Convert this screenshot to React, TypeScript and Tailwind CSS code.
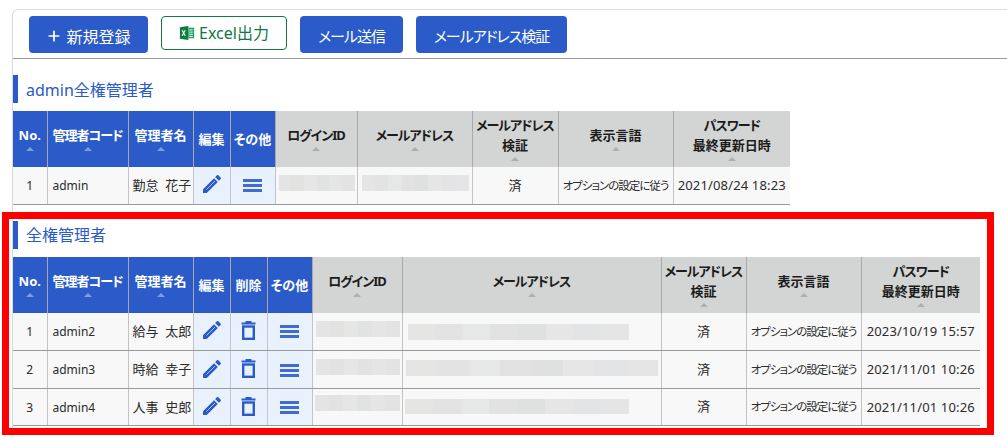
import { Plus } from 'lucide-react';

const blue = 'text-[#2a5bc8]';

type Blur = { box: string; colors: string[] };
type Row = { no: string; code: string; name: string; login: Blur; mail: Blur; lang: string; date: string };

function Arrow({ dark }: { dark?: boolean }) {
  return (
    <div className="flex h-2 items-center justify-center">
      <div className={`h-0 w-0 border-x-4 border-b-4 border-x-transparent ${dark ? 'border-b-[#adafae]' : 'border-b-[#7f9cdf]'}`} />
    </div>
  );
}

function PencilIcon() {
  return (
    <svg viewBox="0 0 24 24" className={`mx-auto -mt-0.5 block h-6 w-6 fill-current ${blue}`}>
      <path d="M3 17.25V21h3.75L17.81 9.94l-3.75-3.75L3 17.25zM20.71 7.04c.39-.39.39-1.02 0-1.41l-2.34-2.34c-.39-.39-1.02-.39-1.41 0l-1.83 1.83 3.75 3.75 1.83-1.83z" />
      <path d="M6.500 17.500 15 9" stroke="#e9f1fd" strokeWidth=".7" />
    </svg>
  );
}

function TrashIcon() {
  return (
    <svg viewBox="0 0 15 19" className={`mx-auto -mt-0.5 block h-[19px] w-[15px] ${blue}`} fill="none" stroke="currentColor">
      <path d="M.500 2.500h14" strokeWidth="2" />
      <path d="M4.500 1h6" strokeWidth="2" />
      <rect x="2.200" y="5.500" width="10.600" height="12.300" strokeWidth="2.400" />
    </svg>
  );
}

function MenuIcon() {
  return (
    <div className="mx-auto mt-px flex w-[19px] flex-col gap-[2px]">
      <div className="h-[3px] bg-[#3f6cd0]" />
      <div className="h-[3px] bg-[#3f6cd0]" />
      <div className="h-[3px] bg-[#3f6cd0]" />
    </div>
  );
}

function BlurBox({ box, colors }: Blur) {
  return (
    <div className={`flex ${box}`}>
      {colors.map((c, i) => (
        <div key={i} className={`h-full flex-1 ${c}`} />
      ))}
    </div>
  );
}

// kana in the reference font is set much narrower than in Noto
function K({ children }: { children: React.ReactNode }) {
  return <span className="tracking-[-1px]">{children}</span>;
}

function Th({ children, arrow = true, dark = false }: { children: React.ReactNode; arrow?: boolean; dark?: boolean }) {
  return (
    <th
      className={`whitespace-nowrap border-r border-[#a9a9a9] p-0 text-center align-middle text-[13px] font-bold leading-5 last:border-r-0 [font-feature-settings:'palt'] ${
        dark ? 'bg-[#d3d5d4] text-[#1c1c1c]' : 'bg-[#2a5bc8] text-white'
      }`}
    >
      {children}
      {arrow && <Arrow dark={dark} />}
    </th>
  );
}

const tdBase = 'border-r border-b border-r-[#c4c4c4] border-b-[#9a9a9a] p-0 text-[#2b2b2b] last:border-r-0';

function DataRow({ row, canDelete, h }: { row: Row; canDelete: boolean; h: string }) {
  return (
    <tr className={`${h} bg-[#f8f8f8]`}>
      <td className={`${tdBase} pt-px text-center text-[12px]`}>{row.no}</td>
      <td className={`${tdBase} pl-[5px] pt-px text-[12px]`}>{row.code}</td>
      <td className={`${tdBase} pl-1 pt-px whitespace-nowrap text-[13px]`}>{row.name}</td>
      <td className={`${tdBase} bg-[#e9f1fd]`}><PencilIcon /></td>
      {canDelete && <td className={`${tdBase} bg-[#e9f1fd]`}><TrashIcon /></td>}
      <td className={`${tdBase} bg-[#e9f1fd]`}><MenuIcon /></td>
      <td className={`${tdBase} align-top`}><BlurBox {...row.login} /></td>
      <td className={`${tdBase} align-top`}><BlurBox {...row.mail} /></td>
      <td className={`${tdBase} text-center text-[13px]`}>済</td>
      <td className={`${tdBase} whitespace-nowrap text-center text-[11.5px] tracking-[-1px] [font-feature-settings:'palt']`}>{row.lang}</td>
      <td className={`${tdBase} pt-px whitespace-nowrap text-center text-[13px] tracking-[0.15px]`}>{row.date}</td>
    </tr>
  );
}

function SectionTitle({ children }: { children: React.ReactNode }) {
  return (
    <h2 className={`mb-2 flex h-7 items-center border-l-[5px] border-[#2a5bc8] pl-2 pt-px text-base font-normal ${blue}`}>
      {children}
    </h2>
  );
}

const g = ['bg-[#e4e4e4]', 'bg-[#e2e2e1]', 'bg-[#e6e6e6]', 'bg-[#e1e2e2]', 'bg-[#e5e5e5]', 'bg-[#e3e3e4]'];
const m = ['bg-[#e5e5e4]', 'bg-[#e3e3e3]', 'bg-[#e6e7e7]', 'bg-[#e1e2e1]', 'bg-[#dfe0e0]', 'bg-[#e6e6e6]', 'bg-[#e3e4e5]', 'bg-[#e5e5e5]'];

const row1: Row = {
  no: '1', code: 'admin', name: '勤怠\u00a0\u00a0花子',
  login: { box: 'ml-[3px] mt-2 h-4 w-[76px]', colors: g },
  mail: { box: 'ml-1 mt-2 h-4 w-[107px]', colors: m },
  lang: 'オプションの設定に従う', date: '2021/08/24 18:23',
};

const rows2: Row[] = [
  {
    no: '1', code: 'admin2', name: '給与\u00a0\u00a0太郎',
    login: { box: 'ml-[3px] mt-2 h-4 w-[84px]', colors: g },
    mail: { box: 'ml-[5px] mt-[11px] h-4 w-[221px]', colors: m },
    lang: 'オプションの設定に従う', date: '2023/10/19 15:57',
  },
  {
    no: '2', code: 'admin3', name: '時給\u00a0\u00a0幸子',
    login: { box: 'ml-[3px] mt-2 h-4 w-[84px]', colors: g },
    mail: { box: 'ml-[3px] mt-[9px] h-4 w-[252px]', colors: m },
    lang: 'オプションの設定に従う', date: '2021/11/01 10:26',
  },
  {
    no: '3', code: 'admin4', name: '人事\u00a0\u00a0史郎',
    login: { box: 'ml-0.5 mt-1.5 h-4 w-[85px]', colors: g },
    mail: { box: 'ml-0.5 mt-2.5 h-[15px] w-[224px]', colors: m },
    lang: 'オプションの設定に従う', date: '2021/11/01 10:26',
  },
];

export default function App() {
  return (
    <div className="relative h-[437px] w-[1007px] overflow-hidden bg-white pl-3 pt-[9px] font-['Noto_Sans','Noto_Sans_CJK_JP',sans-serif]">
      <div className="h-full rounded-tl-md border-l border-t border-l-[#d9d9d9] border-t-[#dddddd]">
        {/* Toolbar */}
        <div className="flex h-[49px] items-start gap-[13px] border-b border-[#999999] pl-4 pt-1.5">
          <button className="flex h-[37px] w-[119px] items-center justify-center gap-1 rounded bg-[#2a5bc8] pt-1 text-base text-white">
            <Plus className="-mt-0.5 h-4 w-4" strokeWidth={2.6} />新規登録
          </button>
          <button className="flex h-[34px] w-[126px] items-center justify-center gap-1 rounded border border-[#0f7a43] bg-white text-base text-[#0f7a43]">
            <svg viewBox="0 0 18 18" className="h-4 w-4">
              <path d="M1 2.500 10.500 1v16L1 15.500z" fill="#107c41" />
              <path d="M10.500 3H17v12h-6.500z" fill="#21a366" />
              <path d="M11.500 5.500h4M11.500 8h4M11.500 10.500h4M11.500 13h4" stroke="#fff" />
              <path d="m3.500 6 3.500 6m0-6-3.500 6" stroke="#fff" strokeWidth="1.300" />
            </svg>
            Excel出力
          </button>
          <button className="flex h-[37px] w-[103px] items-center justify-center rounded bg-[#2a5bc8] pt-1 text-[15px] tracking-[-1px] text-white [font-feature-settings:'palt']">
            メール送信
          </button>
          <button className="flex h-[37px] w-[151px] items-center justify-center rounded bg-[#2a5bc8] pt-1 text-[15px] tracking-[-1px] text-white [font-feature-settings:'palt']">
            メールアドレス検証
          </button>
        </div>

        {/* admin全権管理者 */}
        <section className="mt-4">
          <SectionTitle>admin全権管理者</SectionTitle>
          <table className="w-[777px] table-fixed border-collapse">
            <colgroup>
              <col className="w-[34px]" />
              <col className="w-[81px]" />
              <col className="w-[65px]" />
              <col className="w-[37px]" />
              <col className="w-[45px]" />
              <col className="w-[82px]" />
              <col className="w-[115px]" />
              <col className="w-[86px]" />
              <col className="w-[115px]" />
              <col className="w-[117px]" />
            </colgroup>
            <thead>
              <tr className="h-14">
                <Th>No.</Th>
                <Th><K>管理者コード</K></Th>
                <Th>管理者名</Th>
                <Th arrow={false}>編集</Th>
                <Th arrow={false}>その他</Th>
                <Th dark><K>ログインID</K></Th>
                <Th dark><K>メールアドレス</K></Th>
                <Th dark><K>メールアドレス</K><br />検証</Th>
                <Th dark>表示言語</Th>
                <Th dark><K>パスワード</K><br />最終更新日時</Th>
              </tr>
            </thead>
            <tbody>
              <DataRow row={row1} canDelete={false} h="h-[37px]" />
            </tbody>
          </table>
        </section>

        {/* 全権管理者 */}
        <section className="mt-4">
          <SectionTitle>全権管理者</SectionTitle>
          <table className="w-[967px] table-fixed border-collapse">
            <colgroup>
              <col className="w-[34px]" />
              <col className="w-[81px]" />
              <col className="w-[65px]" />
              <col className="w-[37px]" />
              <col className="w-[37px]" />
              <col className="w-[45px]" />
              <col className="w-[90px]" />
              <col className="w-[259px]" />
              <col className="w-[85px]" />
              <col className="w-[115px]" />
              <col className="w-[119px]" />
            </colgroup>
            <thead>
              <tr className="h-14">
                <Th>No.</Th>
                <Th><K>管理者コード</K></Th>
                <Th>管理者名</Th>
                <Th arrow={false}>編集</Th>
                <Th arrow={false}>削除</Th>
                <Th arrow={false}>その他</Th>
                <Th dark><K>ログインID</K></Th>
                <Th dark><K>メールアドレス</K></Th>
                <Th dark><K>メールアドレス</K><br />検証</Th>
                <Th dark>表示言語</Th>
                <Th dark><K>パスワード</K><br />最終更新日時</Th>
              </tr>
            </thead>
            <tbody>
              {rows2.map((r) => (
                <DataRow key={r.no} row={r} canDelete h={r.no === '3' ? 'h-[37px]' : 'h-[38px]'} />
              ))}
            </tbody>
          </table>
        </section>
      </div>

      {/* red highlight over the second table */}
      <div className="pointer-events-none absolute left-0.5 top-[212px] h-[223px] w-[992px] border-[7px] border-[#ff0000]" />
    </div>
  );
}
